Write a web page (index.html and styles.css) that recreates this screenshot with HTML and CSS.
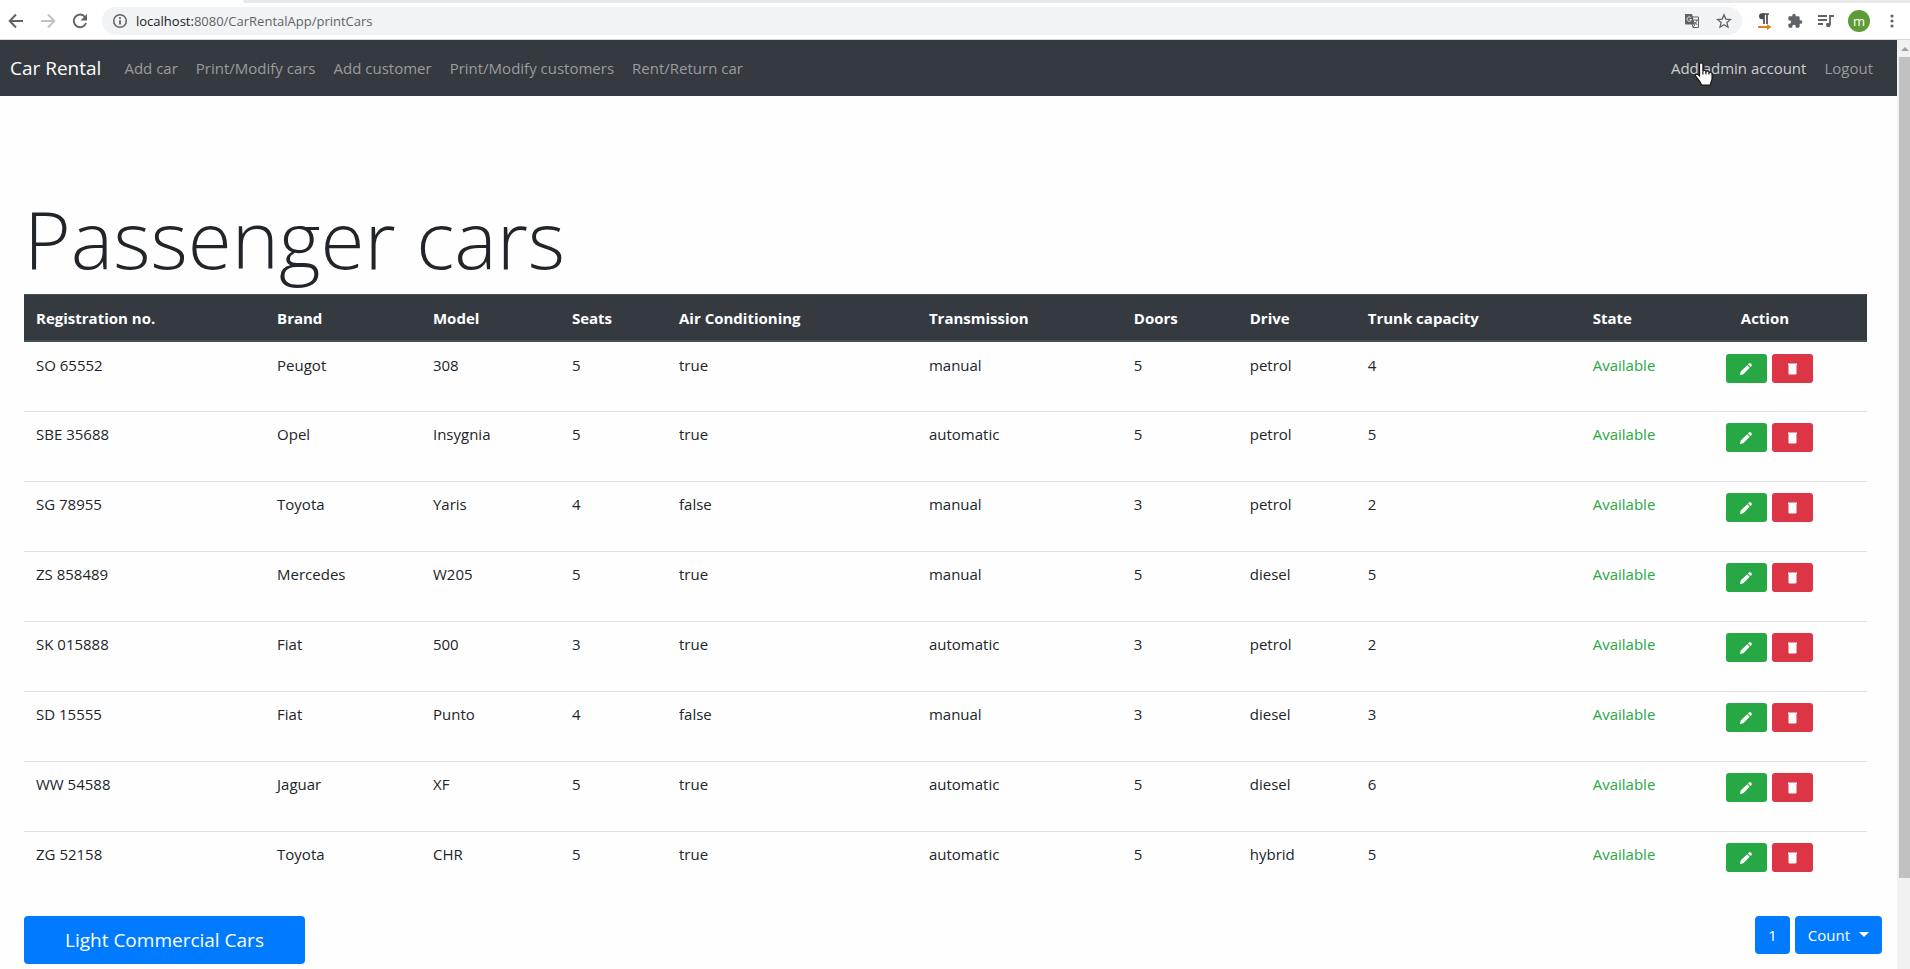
FILE: index.html
```html
<!DOCTYPE html>
<html lang="en">
<head>
<meta charset="utf-8">
<title>Car Rental</title>
<link rel="stylesheet" href="styles.css">
</head>
<body>
<div class="browser">
  <div class="tabstrip"></div>
  <div class="toolbar">
    <button class="tool" aria-label="Back"><svg width="16" height="16" viewBox="0 0 16 16"><path d="M15 8H2M8 1.500L1.700 8L8 14.500" fill="none" stroke="#5f6368" stroke-width="2"/></svg></button>
    <button class="tool" aria-label="Forward"><svg width="16" height="16" viewBox="0 0 16 16"><path d="M1 8h13M8 1.500L14.300 8L8 14.500" fill="none" stroke="#c0c2c4" stroke-width="2"/></svg></button>
    <button class="tool" aria-label="Reload"><svg width="16" height="16" viewBox="0 0 16 16"><path d="M13 4A6.300 6.300 0 1 0 14 10" fill="none" stroke="#5f6368" stroke-width="2"/><path d="M15 1v6.500H8.500z" fill="#5f6368"/></svg></button>
    <div class="address">
      <svg width="16" height="16" viewBox="0 0 16 16"><circle cx="8" cy="8" r="6.300" fill="none" stroke="#5f6368" stroke-width="1.500"/><path d="M8 7.200v4.300M8 4.300v1.700" stroke="#5f6368" stroke-width="1.800"/></svg>
      <span class="url"><span class="host">localhost:</span>8080/CarRentalApp/printCars</span>
      <button class="tool" aria-label="Translate"><svg width="16" height="16" viewBox="0 0 16 16"><path d="M6 4h8.500v10.500H9z" fill="#f1f3f4" stroke="#5f6368"/><path d="M1 1h7l3 10.500H2a1 1 0 0 1-1-1z" fill="#5f6368"/><path d="M7 4.800A2.200 2.200 0 1 0 7.400 6.500H5.500" fill="none" stroke="#f1f3f4"/><path d="M10 7h4M13 7c-.4 2-1.500 3.500-2.500 4.500M10.800 9l2.500 3M9 14.500l2-3" fill="none" stroke="#5f6368"/></svg></button>
      <button class="tool" aria-label="Bookmark"><svg width="16" height="16" viewBox="0 0 16 16"><path d="M8 1.800l1.800 4.300 4.700.4-3.600 3.100 1.100 4.600L8 11.700l-4 2.500 1.100-4.600-3.600-3.100 4.700-.4z" fill="none" stroke="#5f6368" stroke-width="1.300"/></svg></button>
    </div>
    <div class="extensions">
      <button class="tool" aria-label="Paragraph direction"><svg width="16" height="18" viewBox="0 0 16 18"><path d="M12 2H5.500M7 2v10M10 2v10" stroke="#4a4d50" stroke-width="1.700"/><path d="M7 1.200H5a3 3 0 0 0 0 6h2z" fill="#4a4d50"/><path d="M1 15h10" stroke="#d9851c" stroke-width="2"/><path d="M10 12l4.500 3L10 18z" fill="#d9851c"/></svg></button>
      <button class="tool" aria-label="Extensions"><svg width="16" height="16" viewBox="0 0 24 24"><path d="M20.500 11H19V7a2 2 0 0 0-2-2h-4V3.500a2.500 2.500 0 0 0-5 0V5H4a2 2 0 0 0-2 2v3.800h1.500a2.700 2.700 0 0 1 0 5.400H2V20a2 2 0 0 0 2 2h3.800v-1.500a2.700 2.700 0 0 1 5.400 0V22H17a2 2 0 0 0 2-2v-4h1.500a2.500 2.500 0 0 0 0-5z" fill="#5f6368"/></svg></button>
      <button class="tool" aria-label="Media"><svg width="17" height="16" viewBox="0 0 17 16"><path d="M1 3h9M1 7h9M1 11h5M13 12V3h4" fill="none" stroke="#5f6368" stroke-width="1.800"/><circle cx="11.300" cy="12" r="2.300" fill="#5f6368"/></svg></button>
      <button class="avatar">m</button>
      <button class="tool" aria-label="Menu"><svg width="16" height="16" viewBox="0 0 16 16"><g fill="#5f6368"><circle cx="8" cy="3" r="1.600"/><circle cx="8" cy="8" r="1.600"/><circle cx="8" cy="13" r="1.600"/></g></svg></button>
    </div>
  </div>
</div>
<div class="viewport">
  <div class="page">
    <nav class="navbar">
      <a class="brand" href="#">Car Rental</a>
      <a class="link" href="#">Add car</a>
      <a class="link" href="#">Print/Modify cars</a>
      <a class="link" href="#">Add customer</a>
      <a class="link" href="#">Print/Modify customers</a>
      <a class="link" href="#">Rent/Return car</a>
      <div class="account">
        <a class="link hovered" href="#">Add admin account<svg class="pointer" width="20" height="25" viewBox="0 0 18 24" preserveAspectRatio="none"><path d="M5 2.500c0-2 3-2 3 0V9c.5-1.500 2.800-1 2.800.3.700-1 2.700-.6 2.700.8.800-.8 2.700-.3 2.700 1.300V16c0 2-1.200 3-1.400 6H6.800C6 19 2.500 15.500 1.500 13.500c-.7-1.600 1-2.500 2.200-1.300L5 13.500z" fill="#fff" stroke="#111" stroke-width="1"/><path d="M8 9v3M10.800 9.500V12M13.500 10.500V12" stroke="#111"/></svg></a>
        <a class="link" href="#">Logout</a>
      </div>
    </nav>
    <main class="content">
      <h1 class="title">Passenger cars</h1>
      <table class="cars">
        <colgroup><col class="c-reg"><col class="c-brand"><col class="c-model"><col class="c-seats"><col class="c-air"><col class="c-trans"><col class="c-doors"><col class="c-drive"><col class="c-trunk"><col class="c-state"><col class="c-action"></colgroup>
        <thead><tr><th>Registration no.</th><th>Brand</th><th>Model</th><th>Seats</th><th>Air Conditioning</th><th>Transmission</th><th>Doors</th><th>Drive</th><th>Trunk capacity</th><th>State</th><th class="action-head">Action</th></tr></thead>
        <tbody id="rows"></tbody>
      </table>
      <div class="footer">
        <button class="btn btn-large">Light Commercial Cars</button>
        <div class="pager"><button class="btn">1</button><button class="btn">Count<span class="caret"></span></button></div>
      </div>
    </main>
  </div>
  <div class="scrollbar"><span class="arrow"></span><span class="thumb"></span></div>
</div>
<script src="cars.js"></script>
</body>
</html>
```
FILE: styles.css
```css
* { box-sizing: border-box; }
body {
  margin: 0;
  height: 100vh;
  display: flex;
  flex-direction: column;
  overflow: hidden;
  background: #fefefe;
  color: #212529;
  font: 15px/24px "Open Sans", "Noto Sans", sans-serif;
}
button { font: inherit; border: 0; padding: 0; cursor: pointer; }
svg { display: block; }
a { text-decoration: none; }

.browser { background: #fff; border-bottom: 1px solid #d5d7da; flex: none; }
.tabstrip { height: 3px; margin-left: 243px; background: #e9e9e9; border-bottom-left-radius: 4px; }
.toolbar { height: 36px; display: flex; align-items: center; padding: 0 10px 0 8px; }
.tool { background: none; display: flex; flex: none; }
.toolbar > .tool { margin-right: 16px; }
.address {
  flex: 1;
  height: 28px;
  margin-left: -2px;
  border-radius: 14px;
  background: #f1f3f4;
  display: flex;
  align-items: center;
  gap: 16px;
  padding: 0 10px;
}
.url { flex: 1; margin-left: -8px; font-size: 13px; color: #5f6368; }
.host { color: #202124; }
.extensions { display: flex; align-items: center; gap: 14px; margin-left: 15px; }
.avatar { width: 22px; height: 22px; border-radius: 50%; background: #5f9c38; color: #fff; font-size: 13px; line-height: 20px; }

.viewport { flex: 1; min-height: 0; display: flex; }
.page { flex: 1; min-width: 0; overflow: hidden; }
.navbar { height: 56px; background: #343a40; display: flex; align-items: center; gap: 18px; padding: 0 24px 0 10px; }
.brand { color: #fff; font-size: 19px; margin-right: 5px; }
.link { color: #999c9f; position: relative; }
.hovered { color: #ccced0; }
.account { display: flex; gap: 18px; margin-left: auto; }
.pointer { position: absolute; left: 23px; top: 6px; }

.content { padding: 92px 15px 0 24px; }
.title { margin: 0; padding-bottom: 6px; font-size: 80px; line-height: 100px; font-weight: 300; }
.cars { width: calc(100% - 15px); table-layout: fixed; border-collapse: separate; border-spacing: 0; }
.cars th { height: 48px; padding: 0 12px; text-align: left; font-size: 15px; font-weight: 700; color: #fff; background: #343a40; border-top: 1px solid #454d55; border-bottom: 2px solid #454d55; white-space: nowrap; }
.cars .action-head { padding-left: 27px; }
.cars td { height: 70px; padding: 10px 12px; vertical-align: top; border-top: 1px solid #dee2e6; }
.cars tbody tr:first-child td { height: 69px; border-top-color: transparent; }
.cars .available { color: #28a745; }
.c-reg { width: 13.08%; }
.c-brand { width: 8.46%; }
.c-model { width: 7.54%; }
.c-seats { width: 5.81%; }
.c-air { width: 13.56%; }
.c-trans { width: 11.12%; }
.c-doors { width: 6.29%; }
.c-drive { width: 6.4%; }
.c-trunk { width: 12.21%; }
.c-state { width: 7.22%; }
.actions { display: flex; gap: 5px; padding-top: 1px; }
.icon-btn { width: 41px; height: 29px; border-radius: 3px; display: flex; align-items: center; justify-content: center; }
.edit { background: #28a745; }
.delete { background: #dc3545; }

.footer { display: flex; justify-content: space-between; align-items: flex-start; padding-top: 15px; }
.btn { background: #007bff; color: #fff; border-radius: 4px; height: 38px; padding: 0 13px; }
.btn-large { height: 48px; padding: 0 41px; font-size: 19px; }
.pager { display: flex; gap: 5px; }
.caret { display: inline-block; margin-left: 9px; vertical-align: 4px; border: 5px solid transparent; border-top-color: #fff; border-bottom: 0; }

.scrollbar { width: 13px; flex: none; background: #f1f1f1; padding: 7px 0 0 2px; display: flex; flex-direction: column; }
.arrow { align-self: center; border: 4px solid transparent; border-bottom-color: #a0a0a0; border-top: 0; }
.thumb { margin-top: 6px; height: 89%; background: #c1c1c1; }
```
FILE: cars.js
```js
const cars = [
  ["SO 65552", "Peugot", "308", 5, true, "manual", 5, "petrol", 4],
  ["SBE 35688", "Opel", "Insygnia", 5, true, "automatic", 5, "petrol", 5],
  ["SG 78955", "Toyota", "Yaris", 4, false, "manual", 3, "petrol", 2],
  ["ZS 858489", "Mercedes", "W205", 5, true, "manual", 5, "diesel", 5],
  ["SK 015888", "Fiat", "500", 3, true, "automatic", 3, "petrol", 2],
  ["SD 15555", "Fiat", "Punto", 4, false, "manual", 3, "diesel", 3],
  ["WW 54588", "Jaguar", "XF", 5, true, "automatic", 5, "diesel", 6],
  ["ZG 52158", "Toyota", "CHR", 5, true, "automatic", 5, "hybrid", 5]
];
const actions = `<div class="actions">
<button class="icon-btn edit" aria-label="Edit"><svg width="14" height="14" viewBox="0 0 14 14"><path d="M1 13l.7-3.400 6.500-6.300 2.500 2.500-6.400 6.400zM9 2.500l1.300-1.200q.7-.5 1.300 0l1.100 1.200q.5.700 0 1.200L11.500 5z" fill="#fff"/></svg></button>
<button class="icon-btn delete" aria-label="Delete"><svg width="14" height="14" viewBox="0 0 14 14"><path d="M3 1.500h9V3h-.5v8.500q0 1-1 1h-6q-1 0-1-1V3H3z" fill="#fff"/></svg></button>
</div>`;
document.getElementById("rows").innerHTML = cars.map(car =>
  `<tr>${car.map(value => `<td>${value}</td>`).join("")}<td class="available">Available</td><td>${actions}</td></tr>`
).join("");
```
